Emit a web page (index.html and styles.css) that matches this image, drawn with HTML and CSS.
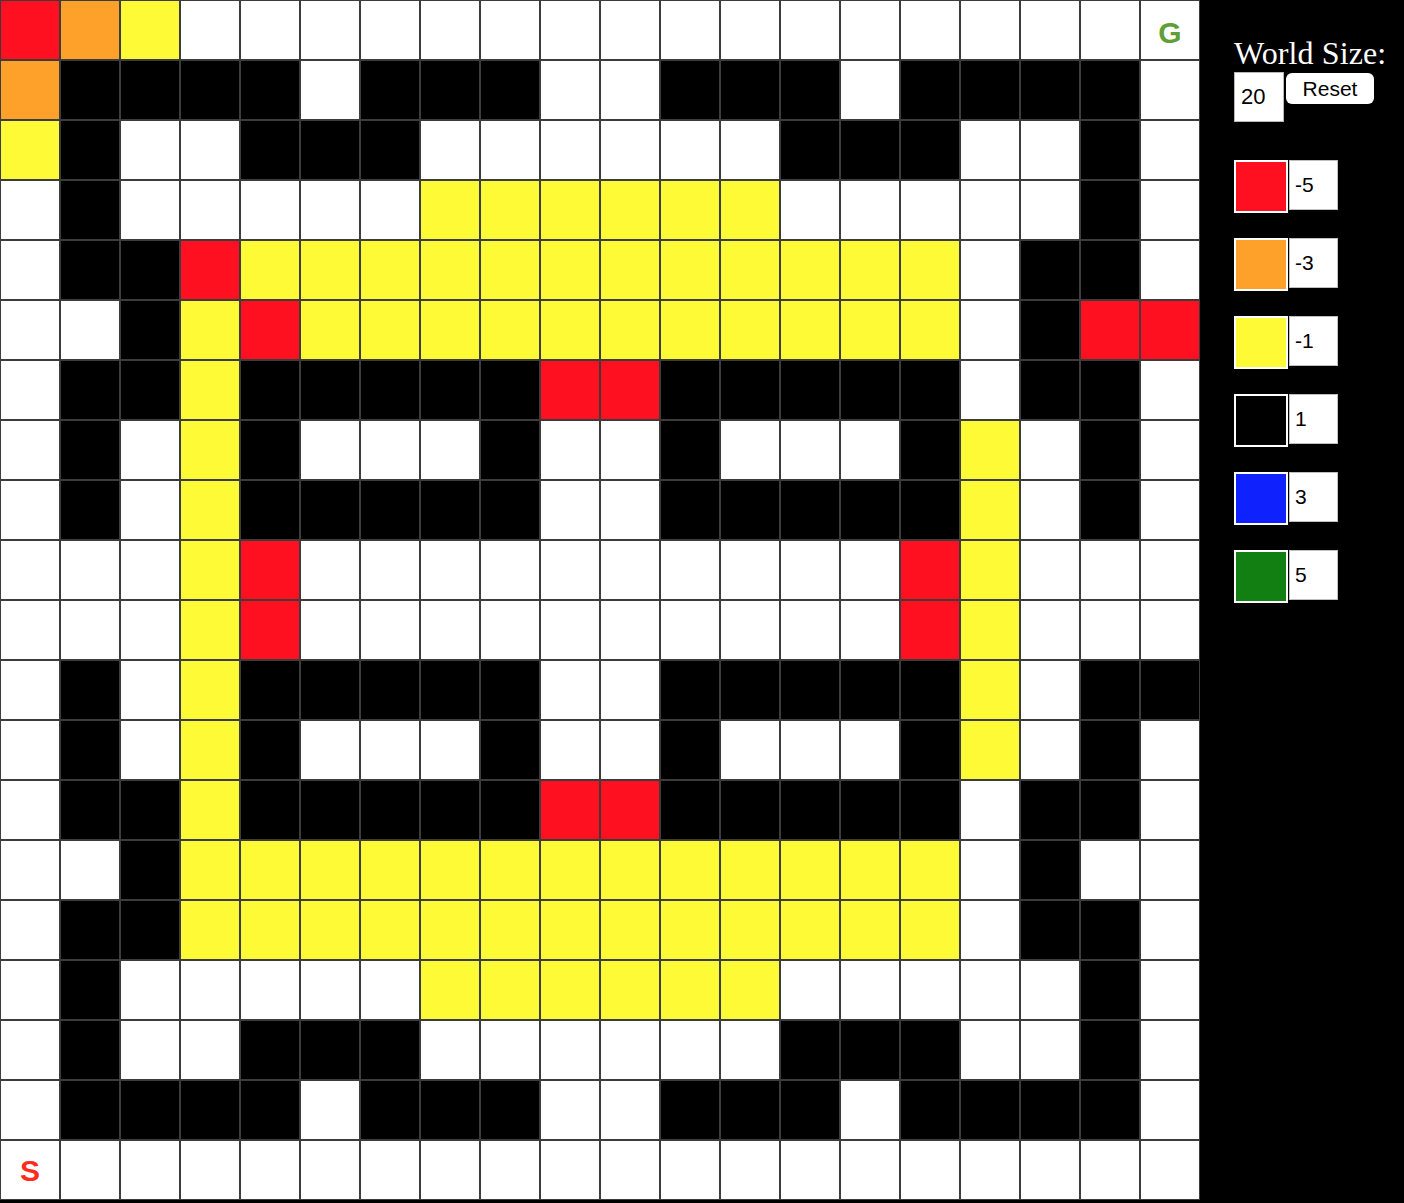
FILE: index.html
```html
<!DOCTYPE html>
<html>
<head>
<meta charset="utf-8">
<title>Grid World</title>
<link rel="stylesheet" href="styles.css">
</head>
<body>
<div class="page">
  <div class="grid">
    <div class="r"></div><div class="o"></div><div class="y"></div><div></div><div></div><div></div><div></div><div></div><div></div><div></div><div></div><div></div><div></div><div></div><div></div><div></div><div></div><div></div><div></div><div class="goal">G</div>
    <div class="o"></div><div class="k"></div><div class="k"></div><div class="k"></div><div class="k"></div><div></div><div class="k"></div><div class="k"></div><div class="k"></div><div></div><div></div><div class="k"></div><div class="k"></div><div class="k"></div><div></div><div class="k"></div><div class="k"></div><div class="k"></div><div class="k"></div><div></div>
    <div class="y"></div><div class="k"></div><div></div><div></div><div class="k"></div><div class="k"></div><div class="k"></div><div></div><div></div><div></div><div></div><div></div><div></div><div class="k"></div><div class="k"></div><div class="k"></div><div></div><div></div><div class="k"></div><div></div>
    <div></div><div class="k"></div><div></div><div></div><div></div><div></div><div></div><div class="y"></div><div class="y"></div><div class="y"></div><div class="y"></div><div class="y"></div><div class="y"></div><div></div><div></div><div></div><div></div><div></div><div class="k"></div><div></div>
    <div></div><div class="k"></div><div class="k"></div><div class="r"></div><div class="y"></div><div class="y"></div><div class="y"></div><div class="y"></div><div class="y"></div><div class="y"></div><div class="y"></div><div class="y"></div><div class="y"></div><div class="y"></div><div class="y"></div><div class="y"></div><div></div><div class="k"></div><div class="k"></div><div></div>
    <div></div><div></div><div class="k"></div><div class="y"></div><div class="r"></div><div class="y"></div><div class="y"></div><div class="y"></div><div class="y"></div><div class="y"></div><div class="y"></div><div class="y"></div><div class="y"></div><div class="y"></div><div class="y"></div><div class="y"></div><div></div><div class="k"></div><div class="r"></div><div class="r"></div>
    <div></div><div class="k"></div><div class="k"></div><div class="y"></div><div class="k"></div><div class="k"></div><div class="k"></div><div class="k"></div><div class="k"></div><div class="r"></div><div class="r"></div><div class="k"></div><div class="k"></div><div class="k"></div><div class="k"></div><div class="k"></div><div></div><div class="k"></div><div class="k"></div><div></div>
    <div></div><div class="k"></div><div></div><div class="y"></div><div class="k"></div><div></div><div></div><div></div><div class="k"></div><div></div><div></div><div class="k"></div><div></div><div></div><div></div><div class="k"></div><div class="y"></div><div></div><div class="k"></div><div></div>
    <div></div><div class="k"></div><div></div><div class="y"></div><div class="k"></div><div class="k"></div><div class="k"></div><div class="k"></div><div class="k"></div><div></div><div></div><div class="k"></div><div class="k"></div><div class="k"></div><div class="k"></div><div class="k"></div><div class="y"></div><div></div><div class="k"></div><div></div>
    <div></div><div></div><div></div><div class="y"></div><div class="r"></div><div></div><div></div><div></div><div></div><div></div><div></div><div></div><div></div><div></div><div></div><div class="r"></div><div class="y"></div><div></div><div></div><div></div>
    <div></div><div></div><div></div><div class="y"></div><div class="r"></div><div></div><div></div><div></div><div></div><div></div><div></div><div></div><div></div><div></div><div></div><div class="r"></div><div class="y"></div><div></div><div></div><div></div>
    <div></div><div class="k"></div><div></div><div class="y"></div><div class="k"></div><div class="k"></div><div class="k"></div><div class="k"></div><div class="k"></div><div></div><div></div><div class="k"></div><div class="k"></div><div class="k"></div><div class="k"></div><div class="k"></div><div class="y"></div><div></div><div class="k"></div><div class="k"></div>
    <div></div><div class="k"></div><div></div><div class="y"></div><div class="k"></div><div></div><div></div><div></div><div class="k"></div><div></div><div></div><div class="k"></div><div></div><div></div><div></div><div class="k"></div><div class="y"></div><div></div><div class="k"></div><div></div>
    <div></div><div class="k"></div><div class="k"></div><div class="y"></div><div class="k"></div><div class="k"></div><div class="k"></div><div class="k"></div><div class="k"></div><div class="r"></div><div class="r"></div><div class="k"></div><div class="k"></div><div class="k"></div><div class="k"></div><div class="k"></div><div></div><div class="k"></div><div class="k"></div><div></div>
    <div></div><div></div><div class="k"></div><div class="y"></div><div class="y"></div><div class="y"></div><div class="y"></div><div class="y"></div><div class="y"></div><div class="y"></div><div class="y"></div><div class="y"></div><div class="y"></div><div class="y"></div><div class="y"></div><div class="y"></div><div></div><div class="k"></div><div></div><div></div>
    <div></div><div class="k"></div><div class="k"></div><div class="y"></div><div class="y"></div><div class="y"></div><div class="y"></div><div class="y"></div><div class="y"></div><div class="y"></div><div class="y"></div><div class="y"></div><div class="y"></div><div class="y"></div><div class="y"></div><div class="y"></div><div></div><div class="k"></div><div class="k"></div><div></div>
    <div></div><div class="k"></div><div></div><div></div><div></div><div></div><div></div><div class="y"></div><div class="y"></div><div class="y"></div><div class="y"></div><div class="y"></div><div class="y"></div><div></div><div></div><div></div><div></div><div></div><div class="k"></div><div></div>
    <div></div><div class="k"></div><div></div><div></div><div class="k"></div><div class="k"></div><div class="k"></div><div></div><div></div><div></div><div></div><div></div><div></div><div class="k"></div><div class="k"></div><div class="k"></div><div></div><div></div><div class="k"></div><div></div>
    <div></div><div class="k"></div><div class="k"></div><div class="k"></div><div class="k"></div><div></div><div class="k"></div><div class="k"></div><div class="k"></div><div></div><div></div><div class="k"></div><div class="k"></div><div class="k"></div><div></div><div class="k"></div><div class="k"></div><div class="k"></div><div class="k"></div><div></div>
    <div class="start">S</div><div></div><div></div><div></div><div></div><div></div><div></div><div></div><div></div><div></div><div></div><div></div><div></div><div></div><div></div><div></div><div></div><div></div><div></div><div></div>
  </div>
  <div class="panel">
    <div class="title">World Size:</div>
    <div class="size-row">
      <div class="size-input">20</div>
      <div class="reset">Reset</div>
    </div>
    <div class="legend">
      <div class="item"><div class="swatch r"></div><div class="val">-5</div></div>
      <div class="item"><div class="swatch o"></div><div class="val">-3</div></div>
      <div class="item"><div class="swatch y"></div><div class="val">-1</div></div>
      <div class="item"><div class="swatch k"></div><div class="val">1</div></div>
      <div class="item"><div class="swatch b"></div><div class="val">3</div></div>
      <div class="item"><div class="swatch g"></div><div class="val">5</div></div>
    </div>
  </div>
</div>
</body>
</html>
```

FILE: styles.css
```css
html, body {
  margin: 0;
  padding: 0;
  background: #000;
}

.page {
  display: flex;
  min-height: 100vh;
}

.grid {
  display: grid;
  grid-template-columns: repeat(20, 60px);
  grid-auto-rows: 60px;
  width: 1200px;
  height: 1200px;
  background: #fff;
}

.grid > div {
  box-sizing: border-box;
  border: 1px solid #3c3c3c;
  background: #fff;
  font-family: "Liberation Sans", Arial, sans-serif;
  font-weight: bold;
  font-size: 30px;
  text-align: center;
  line-height: 56px;
}

.grid > div.k { background: #000; }
.grid > div.r { background: #fe1020; }
.grid > div.o { background: #fea12a; }
.grid > div.y { background: #fefb36; }

.grid > div.goal {
  color: #5f9f38;
  padding-top: 4px;
}

.grid > div.start {
  color: #fe2c1e;
  padding-top: 2px;
}

.panel {
  flex: 1;
  background: #000;
  padding: 36px 0 0 34px;
  display: flex;
  flex-direction: column;
}

.title {
  font-family: "Liberation Serif", "Times New Roman", serif;
  font-size: 32px;
  line-height: 34px;
  color: #fff;
  letter-spacing: 0.1px;
}

.size-row {
  display: flex;
  align-items: flex-start;
  gap: 2px;
  margin-top: 2px;
}

.size-input {
  box-sizing: border-box;
  width: 50px;
  height: 50px;
  background: #fff;
  border: 1px solid #b8b8b8;
  font-family: "Liberation Sans", Arial, sans-serif;
  font-size: 22px;
  line-height: 48px;
  padding-left: 6px;
  color: #000;
}

.reset {
  box-sizing: border-box;
  width: 88px;
  height: 31px;
  margin-top: 1px;
  background: #fff;
  border-radius: 6px;
  font-family: "Liberation Sans", Arial, sans-serif;
  font-size: 21px;
  line-height: 31px;
  text-align: center;
  color: #000;
}

.legend {
  display: flex;
  flex-direction: column;
  gap: 25px;
  margin-top: 38px;
}

.item {
  display: flex;
  align-items: flex-start;
  gap: 1px;
}

.swatch {
  width: 50px;
  height: 49px;
  border: 2px solid #fff;
}

.swatch.r { background: #fe1020; }
.swatch.o { background: #fea12a; }
.swatch.y { background: #fefb36; }
.swatch.k { background: #000; }
.swatch.b { background: #0f22fe; }
.swatch.g { background: #117f12; }

.val {
  box-sizing: border-box;
  width: 49px;
  height: 50px;
  background: #fff;
  border: 1px solid #c0c0c0;
  font-family: "Liberation Sans", Arial, sans-serif;
  font-size: 21px;
  line-height: 48px;
  padding-left: 5px;
  color: #000;
}
```
